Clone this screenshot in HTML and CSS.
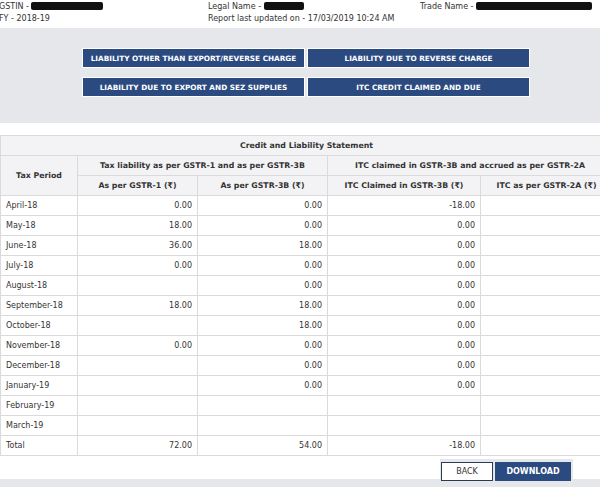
FILE: index.html
```html
<!DOCTYPE html>
<html>
<head>
    <meta charset="utf-8">
    <title>Credit and Liability Statement</title>
    <link rel="stylesheet" href="styles.css">
</head>
<body>
    <div class="top-info">
        <div class="info-col">
            <div>GSTIN - <span class="mask mask-gstin"></span></div>
            <div>FY - 2018-19</div>
        </div>
        <div class="info-col">
            <div>Legal Name - <span class="mask mask-legal"></span></div>
            <div>Report last updated on - 17/03/2019 10:24 AM</div>
        </div>
        <div class="info-col">
            <div>Trade Name - <span class="mask mask-trade"></span></div>
        </div>
    </div>

    <div class="tab-panel">
        <div class="tab-grid">
            <button class="tab-btn">LIABILITY OTHER THAN EXPORT/REVERSE CHARGE</button>
            <button class="tab-btn">LIABILITY DUE TO REVERSE CHARGE</button>
            <button class="tab-btn">LIABILITY DUE TO EXPORT AND SEZ SUPPLIES</button>
            <button class="tab-btn">ITC CREDIT CLAIMED AND DUE</button>
        </div>
    </div>

    <table class="statement">
        <colgroup>
            <col class="c-period">
            <col class="c-r1">
            <col class="c-3b">
            <col class="c-itc">
            <col class="c-2a">
        </colgroup>
        <thead>
            <tr>
                <th colspan="5" class="caption">Credit and Liability Statement</th>
            </tr>
            <tr>
                <th rowspan="2">Tax Period</th>
                <th colspan="2">Tax liability as per GSTR-1 and as per GSTR-3B</th>
                <th colspan="2">ITC claimed in GSTR-3B and accrued as per GSTR-2A</th>
            </tr>
            <tr>
                <th>As per GSTR-1 (₹)</th>
                <th>As per GSTR-3B (₹)</th>
                <th>ITC Claimed in GSTR-3B (₹)</th>
                <th>ITC as per GSTR-2A (₹)</th>
            </tr>
        </thead>
        <tbody>
            <tr><td>April-18</td><td class="num">0.00</td><td class="num">0.00</td><td class="num">-18.00</td><td></td></tr>
            <tr><td>May-18</td><td class="num">18.00</td><td class="num">0.00</td><td class="num">0.00</td><td></td></tr>
            <tr><td>June-18</td><td class="num">36.00</td><td class="num">18.00</td><td class="num">0.00</td><td></td></tr>
            <tr><td>July-18</td><td class="num">0.00</td><td class="num">0.00</td><td class="num">0.00</td><td></td></tr>
            <tr><td>August-18</td><td class="num"></td><td class="num">0.00</td><td class="num">0.00</td><td></td></tr>
            <tr><td>September-18</td><td class="num">18.00</td><td class="num">18.00</td><td class="num">0.00</td><td></td></tr>
            <tr><td>October-18</td><td class="num"></td><td class="num">18.00</td><td class="num">0.00</td><td></td></tr>
            <tr><td>November-18</td><td class="num">0.00</td><td class="num">0.00</td><td class="num">0.00</td><td></td></tr>
            <tr><td>December-18</td><td class="num"></td><td class="num">0.00</td><td class="num">0.00</td><td></td></tr>
            <tr><td>January-19</td><td class="num"></td><td class="num">0.00</td><td class="num">0.00</td><td></td></tr>
            <tr><td>February-19</td><td class="num"></td><td class="num"></td><td class="num"></td><td></td></tr>
            <tr><td>March-19</td><td class="num"></td><td class="num"></td><td class="num"></td><td></td></tr>
            <tr><td>Total</td><td class="num">72.00</td><td class="num">54.00</td><td class="num">-18.00</td><td></td></tr>
        </tbody>
    </table>

    <div class="footer">
        <div class="footer-strip"></div>
        <div class="actions">
            <button class="btn btn-back">BACK</button>
            <button class="btn btn-download">DOWNLOAD</button>
        </div>
    </div>
</body>
</html>
```

FILE: styles.css
```css
* {
    box-sizing: border-box;
}

body {
    margin: 0;
    background: #fff;
    color: #333;
    font-family: "DejaVu Sans", Verdana, sans-serif;
    font-size: 8px;
    overflow: hidden;
    width: 600px;
    height: 487px;
}

/* header with taxpayer details */
.top-info {
    display: grid;
    grid-template-columns: 209px 212px 1fr;
    margin-left: -1px;
    padding-top: 1px;
    height: 28px;
    line-height: 12px;
}

.mask {
    display: inline-block;
    height: 8px;
    background: #111;
    border-radius: 2px;
    vertical-align: -1px;
}

.mask-gstin {
    width: 72px;
}

.mask-legal {
    width: 40px;
}

.mask-trade {
    width: 116px;
}

/* tab buttons */
.tab-panel {
    background: #e5e7ea;
    height: 95px;
    padding: 20px 0 0 82px;
}

.tab-grid {
    display: grid;
    grid-template-columns: 223px 223px;
    column-gap: 2px;
    row-gap: 9px;
}

.tab-btn {
    height: 20px;
    border: 1px solid #fff;
    background: #2b4a80;
    color: #fff;
    font-family: inherit;
    font-size: 7.3px;
    font-weight: bold;
    white-space: nowrap;
    padding: 0;
    cursor: pointer;
}

/* statement table */
.statement {
    margin-top: 12px;
    width: 612px;
    border-collapse: collapse;
    table-layout: fixed;
}

.c-period { width: 77px; }
.c-r1 { width: 120px; }
.c-3b { width: 130px; }
.c-itc { width: 153px; }
.c-2a { width: 132px; }

.statement th,
.statement td {
    border: 1px solid #dadada;
    height: 20px;
    padding: 0 5px;
}

.statement th {
    background: #f3f3f5;
    font-weight: bold;
    font-size: 7.8px;
    text-align: center;
}

.statement td {
    background: #fff;
}

.statement .num {
    text-align: right;
}

/* bottom actions */
.footer {
    position: relative;
    height: 32px;
}

.footer-strip {
    position: absolute;
    left: 0;
    right: 0;
    bottom: 0;
    height: 9px;
    background: #e5e7ea;
}

.actions {
    position: absolute;
    left: 440px;
    top: 3px;
    width: 133px;
    height: 32px;
    background: #e5e7ea;
    display: flex;
    gap: 2px;
    padding: 3px 1px 0;
}

.btn {
    height: 19px;
    font-family: inherit;
    font-size: 8px;
    padding: 0;
}

.btn-back {
    width: 52px;
    background: #fff;
    border: 1px solid #2b3a55;
    color: #333;
}

.btn-download {
    width: 76px;
    background: #2b4a80;
    border: 1px solid #2b4a80;
    color: #fff;
    font-weight: bold;
}
```
